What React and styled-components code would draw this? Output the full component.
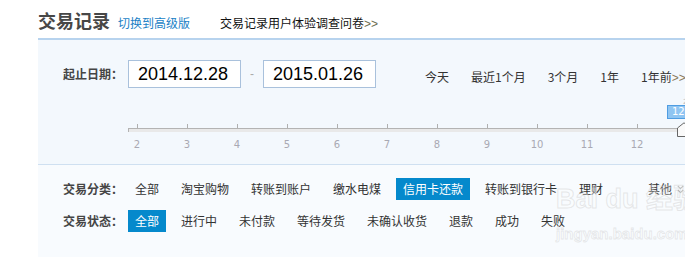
import React from "react";
import styled, { createGlobalStyle } from "styled-components";

const Global = createGlobalStyle`
  html, body { margin: 0; padding: 0; background: #fff; overflow: hidden; }
  body { font-family: "Noto Sans CJK SC", "Liberation Sans", sans-serif; }
`;

const Page = styled.div`
  width: 1000px;
  position: relative;
`;

const TitleRow = styled.div`
  height: 38px;
  padding-left: 38px;
  display: flex;
  align-items: baseline;
  box-sizing: border-box;
  padding-top: 8px;
`;

const Title = styled.h1`
  margin: 0;
  font-size: 18px;
  line-height: 24px;
  font-weight: bold;
  color: #474747;
`;

const SwitchLink = styled.a`
  margin-left: 8px;
  font-size: 12px;
  color: #1a7fc6;
  text-decoration: none;
`;

const SurveyLink = styled.a`
  margin-left: 30px;
  font-size: 12px;
  color: #111;
  text-decoration: none;
`;

const Arrows = styled.span`
  color: ${(p) => p.$color || "#666"};
  font-family: "Liberation Sans", sans-serif;
`;

const DatePanel = styled.section`
  margin-left: 38px;
  height: 127px;
  box-sizing: border-box;
  background: #f3f8fd;
  border-top: 2px solid #b7d3ee;
  border-bottom: 1px solid #cfe0f1;
  padding: 20px 0 0 25px;
`;

const Row = styled.div`
  display: flex;
  align-items: center;
  height: ${(p) => p.$h || 22}px;
`;

const Label = styled.span`
  width: 65px;
  flex: none;
  font-size: 12px;
  font-weight: bold;
  color: #454545;
  line-height: 22px;
`;

const DateInput = styled.div`
  width: 113px;
  height: 28px;
  box-sizing: border-box;
  border: 1px solid #a9c1dc;
  background: #fff;
  padding-left: 9px;
  font-family: "Liberation Sans", Arial, sans-serif;
  font-size: 18px;
  line-height: 26px;
  color: #000;
`;

const Dash = styled.span`
  width: 22px;
  text-align: center;
  color: #aaa;
  font-size: 12px;
  font-family: "Liberation Sans", sans-serif;
`;

const QuickLinks = styled.div`
  margin-left: 49px;
  display: flex;
  gap: 22px;
  padding-top: 4px;
`;

const QuickLink = styled.a`
  font-size: 12px;
  color: #333;
  text-decoration: none;
  white-space: nowrap;
`;

const SliderBlock = styled.div`
  position: relative;
  margin-left: 65px;
  padding-top: 36px;
`;

const TickRow = styled.div`
  display: flex;
  margin-left: -16px;
  height: 4px;
`;

const TickCell = styled.div`
  width: 50px;
  flex: none;
  display: flex;
  justify-content: center;
  &::before {
    content: "";
    width: 1px;
    height: 4px;
    background: #b0b0b0;
  }
`;

const Track = styled.div`
  width: 760px;
  height: 3px;
  background: #e9e9e9;
  border-top: 1px solid #b3b3b3;
  border-left: 1px solid #b3b3b3;
`;

const LabelRow = styled.div`
  display: flex;
  margin-left: -16px;
  margin-top: 7px;
`;

const TickLabel = styled.div`
  width: 50px;
  flex: none;
  text-align: center;
  font-family: "DejaVu Sans", Verdana, sans-serif;
  font-size: 10px;
  line-height: 12px;
  color: #a9a9b3;
`;

const Tooltip = styled.div`
  position: absolute;
  left: 539px;
  top: 17px;
  height: 14px;
  padding: 0 4px;
  box-sizing: border-box;
  background: #8fc5f2;
  border: 1px solid #4f9de2;
  color: #fff;
  font-family: "DejaVu Sans", Verdana, sans-serif;
  font-size: 10px;
  line-height: 12px;
  white-space: nowrap;
`;

const YearTag = styled.div`
  position: absolute;
  left: 555px;
  top: 11px;
  font-family: "DejaVu Sans", sans-serif;
  font-size: 7px;
  line-height: 7px;
  color: #bbb;
`;

const Handle = styled.svg`
  position: absolute;
  left: 549px;
  top: 34px;
`;

const FilterPanel = styled.section`
  margin-left: 38px;
  height: 92px;
  box-sizing: border-box;
  background: #f8fbfe;
  padding: 13px 0 0 25px;
  display: flex;
  flex-direction: column;
  gap: 10px;
`;

const Items = styled.div`
  display: flex;
  gap: 8px;
`;

const Item = styled.a`
  display: flex;
  align-items: center;
  height: 22px;
  padding: 0 7px;
  font-size: 12px;
  line-height: 22px;
  text-decoration: none;
  white-space: nowrap;
  color: ${(p) => (p.$active ? "#fff" : "#333")};
  background: ${(p) => (p.$active ? "#0589cc" : "transparent")};
  margin-left: ${(p) => p.$ml || 0}px;
`;

const MoreIcon = styled.svg`
  margin-left: 5px;
`;

const Watermark = styled.div`
  position: absolute;
  left: 556px;
  top: 184px;
  pointer-events: none;
  color: rgba(255, 255, 255, 0.25);
  -webkit-text-stroke: 1px rgba(205, 205, 205, 0.45);
  font-family: "Liberation Sans", "Noto Sans CJK SC", sans-serif;
`;

const WmTop = styled.div`
  font-size: 27px;
  font-weight: bold;
  line-height: 30px;
  white-space: nowrap;
`;

const WmBottom = styled.div`
  font-size: 15px;
  font-weight: bold;
  line-height: 18px;
  margin-top: 11px;
  -webkit-text-stroke: 0.8px rgba(205, 205, 205, 0.45);
`;

const categories = ["全部", "淘宝购物", "转账到账户", "缴水电煤", "信用卡还款", "转账到银行卡", "理财"];
const statuses = ["全部", "进行中", "未付款", "等待发货", "未确认收货", "退款", "成功", "失败"];
const ticks = [2, 3, 4, 5, 6, 7, 8, 9, 10, 11, 12];

export default function App() {
  return (
    <Page>
      <Global />
      <TitleRow>
        <Title>交易记录</Title>
        <SwitchLink>切换到高级版</SwitchLink>
        <SurveyLink>
          交易记录用户体验调查问卷<Arrows $color="#6b6b50">&gt;&gt;</Arrows>
        </SurveyLink>
      </TitleRow>

      <DatePanel>
        <Row $h={28}>
          <Label>起止日期：</Label>
          <DateInput>2014.12.28</DateInput>
          <Dash>-</Dash>
          <DateInput>2015.01.26</DateInput>
          <QuickLinks>
            <QuickLink>今天</QuickLink>
            <QuickLink>最近1个月</QuickLink>
            <QuickLink>3个月</QuickLink>
            <QuickLink>1年</QuickLink>
            <QuickLink>
              1年前<Arrows $color="#8a7a5a">&gt;&gt;</Arrows>
            </QuickLink>
          </QuickLinks>
        </Row>
        <SliderBlock>
          <TickRow>
            {ticks.map((t) => (
              <TickCell key={t} />
            ))}
          </TickRow>
          <Track />
          <LabelRow>
            {ticks.map((t) => (
              <TickLabel key={t}>{t}</TickLabel>
            ))}
          </LabelRow>
          <YearTag>2015</YearTag>
          <Tooltip>12.26</Tooltip>
          <Handle width="14" height="15" viewBox="0 0 14 15">
            <path d="M0.5 14.5 V6 L7 0.8 L13.5 6 V14.5 Z" fill="#fafafa" stroke="#666" strokeWidth="1" />
          </Handle>
        </SliderBlock>
      </DatePanel>

      <FilterPanel>
        <Row>
          <Label>交易分类：</Label>
          <Items>
            {categories.map((c) => (
              <Item key={c} $active={c === "信用卡还款"}>
                {c}
              </Item>
            ))}
            <Item $ml={23}>
              其他
              <MoreIcon width="7" height="9" viewBox="0 0 7 9">
                <path d="M0.8 1 L3.5 3.6 L6.2 1 M0.8 5 L3.5 7.6 L6.2 5" fill="none" stroke="#aaa" strokeWidth="1.1" />
              </MoreIcon>
            </Item>
          </Items>
        </Row>
        <Row>
          <Label>交易状态：</Label>
          <Items>
            {statuses.map((s, i) => (
              <Item key={s} $active={i === 0}>
                {s}
              </Item>
            ))}
          </Items>
        </Row>
      </FilterPanel>

      <Watermark>
        <WmTop>Bai du 经验</WmTop>
        <WmBottom>jingyan.baidu.com</WmBottom>
      </Watermark>
    </Page>
  );
}
